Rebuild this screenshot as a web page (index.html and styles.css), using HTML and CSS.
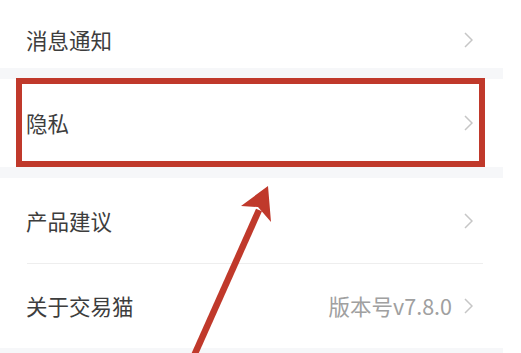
FILE: index.html
```html
<!DOCTYPE html>
<html lang="zh-CN">
<head>
<meta charset="utf-8">
<link rel="stylesheet" href="styles.css">
</head>
<body>
<div class="page">
  <div class="list">
    <div class="card">
      <div class="row row-first">
        <span class="label">消息通知</span>
        <svg class="chev" width="9" height="16" viewBox="0 0 9 16"><polyline points="1,1 8,8 1,15" fill="none" stroke="#c6c6c6" stroke-width="1.5"/></svg>
      </div>
    </div>
    <div class="card">
      <div class="row row-privacy">
        <span class="label">隐私</span>
        <svg class="chev" width="9" height="16" viewBox="0 0 9 16"><polyline points="1,1 8,8 1,15" fill="none" stroke="#c6c6c6" stroke-width="1.5"/></svg>
      </div>
    </div>
    <div class="card">
      <div class="row row-suggest">
        <span class="label">产品建议</span>
        <svg class="chev" width="9" height="16" viewBox="0 0 9 16"><polyline points="1,1 8,8 1,15" fill="none" stroke="#c6c6c6" stroke-width="1.5"/></svg>
      </div>
      <div class="sep"></div>
      <div class="row row-about">
        <span class="label">关于交易猫</span>
        <span class="extra">版本号v7.8.0</span>
        <svg class="chev" width="9" height="16" viewBox="0 0 9 16"><polyline points="1,1 8,8 1,15" fill="none" stroke="#c6c6c6" stroke-width="1.5"/></svg>
      </div>
    </div>
  </div>
  <div class="highlight"></div>
  <svg class="arrow" width="521" height="353" viewBox="0 0 521 353">
    <line x1="193" y1="358" x2="259" y2="210" stroke="#c0392b" stroke-width="6.5" stroke-linecap="butt"/>
    <polygon points="268,186 241,206 258,207 271,222" fill="#c0392b"/>
  </svg>
</div>
</body>
</html>
```
FILE: styles.css
```css
html, body {
  margin: 0;
  padding: 0;
  background: #ffffff;
}
.page {
  position: relative;
  width: 521px;
  height: 353px;
  overflow: hidden;
  font-family: "Noto Sans CJK SC", "Noto Sans", sans-serif;
}
.list {
  width: 503px;
  height: 353px;
  background: #f6f7f9;
  display: flex;
  flex-direction: column;
  gap: 11px;
}
.card {
  background: #ffffff;
  display: flex;
  flex-direction: column;
}
.row {
  display: flex;
  align-items: center;
  padding-left: 26px;
  padding-right: 30px;
  box-sizing: border-box;
}
.row-first {
  height: 68px;
  padding-top: 12px;
}
.row-privacy {
  height: 89px;
  margin-top: -1px;
}
.row-suggest {
  height: 85px;
}
.row-about {
  height: 84px;
}
.sep {
  height: 1px;
  background: #eeeeee;
  margin: 0 20px 0 27px;
}
.label {
  font-size: 21.5px;
  color: #3d3d3d;
  flex: 1;
  line-height: 1;
}
.extra {
  font-size: 21.5px;
  color: #a0a0a0;
  margin-right: 12px;
  line-height: 1;
}
.chev {
  display: block;
  flex: none;
}
.highlight {
  position: absolute;
  left: 16px;
  top: 78px;
  width: 469px;
  height: 89px;
  box-sizing: border-box;
  border: 6px solid #c0392b;
}
.arrow {
  position: absolute;
  left: 0;
  top: 0;
}
```
